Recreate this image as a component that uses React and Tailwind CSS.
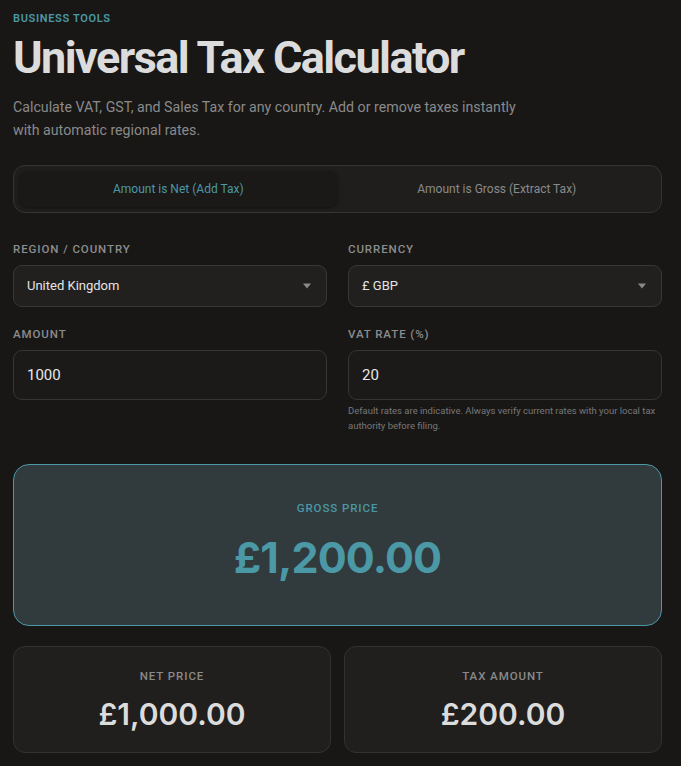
import { useState } from "react";

const SANS = "font-['Roboto','Liberation_Sans',sans-serif]";
const NUM = "font-['Inter','Roboto',sans-serif]";

function Caret() {
  return (
    <svg width="10" height="6" viewBox="0 0 10 6" className="shrink-0">
      <path d="M1 0.5h8L5 5.5z" fill="#8a8a8a" />
    </svg>
  );
}

function Label({ children }) {
  return (
    <label className="block text-[11.5px] font-medium tracking-[0.08em] uppercase text-[#8c8c8c] mb-[7px]">
      {children}
    </label>
  );
}

function Select({ value }) {
  return (
    <div className="h-[42px] rounded-[9px] border border-[#383736] bg-[#21201f] flex items-center justify-between pl-[13px] pr-[14px]">
      <span className="text-[13px] text-[#e4e4e4]">{value}</span>
      <Caret />
    </div>
  );
}

function Field({ value, onChange }) {
  return (
    <input
      value={value}
      onChange={(e) => onChange(e.target.value)}
      className="w-full h-[50px] rounded-[9px] border border-[#363534] bg-[#1b1a19] px-[13px] text-[15px] text-[#e8e8e8] outline-none"
    />
  );
}

function fmt(n) {
  return "£" + n.toLocaleString("en-GB", { minimumFractionDigits: 2, maximumFractionDigits: 2 });
}

export default function App() {
  const [mode, setMode] = useState("net");
  const [amount, setAmount] = useState("1000");
  const [rate, setRate] = useState("20");

  const a = parseFloat(amount) || 0;
  const r = (parseFloat(rate) || 0) / 100;
  const net = mode === "net" ? a : a / (1 + r);
  const tax = net * r;
  const gross = net + tax;

  return (
    <div className={`min-h-screen bg-[#181716] ${SANS} pl-[13px] pr-[19px] pt-[11px] pb-[14px]`}>
      <p className="text-[11px] font-semibold tracking-[0.06em] text-[#4b98a6]">BUSINESS TOOLS</p>
      <h1 className="mt-[5px] text-[45px] leading-[50px] font-bold tracking-[-0.035em] text-[#dcdcdc]">
        Universal Tax Calculator
      </h1>
      <p className="mt-[13px] text-[14.2px] leading-[23px] text-[#8a8a8a] max-w-[520px]">
        Calculate VAT, GST, and Sales Tax for any country. Add or remove taxes instantly with
        automatic regional rates.
      </p>

      <div className="mt-[23px] h-[48px] rounded-[12px] border border-[#353433] bg-[#1f1e1d] p-[5px] flex">
        <button
          onClick={() => setMode("net")}
          className={`flex-1 rounded-[9px] text-[12px] ${
            mode === "net" ? "bg-[#1a1918] text-[#4b98a6] shadow-[0_1px_3px_rgba(0,0,0,0.4)]" : "text-[#8a8a8a]"
          }`}
        >
          Amount is Net (Add Tax)
        </button>
        <button
          onClick={() => setMode("gross")}
          className={`flex-1 rounded-[9px] text-[12px] ${
            mode === "gross" ? "bg-[#1a1918] text-[#4b98a6] shadow-[0_1px_3px_rgba(0,0,0,0.4)]" : "text-[#8a8a8a]"
          }`}
        >
          Amount is Gross (Extract Tax)
        </button>
      </div>

      <div className="mt-[28px] grid grid-cols-2 gap-x-[21px]">
        <div>
          <Label>Region / Country</Label>
          <Select value="United Kingdom" />
        </div>
        <div>
          <Label>Currency</Label>
          <Select value="£ GBP" />
        </div>
      </div>

      <div className="mt-[19px] grid grid-cols-2 gap-x-[21px]">
        <div>
          <Label>Amount</Label>
          <Field value={amount} onChange={setAmount} />
        </div>
        <div>
          <Label>VAT Rate (%)</Label>
          <Field value={rate} onChange={setRate} />
          <p className="mt-[3px] text-[9.5px] leading-[15px] text-[#787878]">
            Default rates are indicative. Always verify current rates with your local tax authority
            before filing.
          </p>
        </div>
      </div>

      <div className="mt-[31px] h-[162px] rounded-[16px] border border-[#4b98a6] bg-[#313a3c] flex flex-col items-center pt-[35px]">
        <p className="text-[11.5px] font-medium tracking-[0.08em] text-[#4b98a6]">GROSS PRICE</p>
        <p className={`${NUM} mt-[16px] text-[43px] leading-[48px] font-bold tracking-[-0.02em] text-[#4b98a6]`}>
          {fmt(gross)}
        </p>
      </div>

      <div className="mt-[20px] grid grid-cols-2 gap-x-[13px]">
        <div className="h-[107px] rounded-[12px] border border-[#333231] bg-[#201f1e] flex flex-col items-center pt-[21px]">
          <p className="text-[11.5px] font-medium tracking-[0.08em] text-[#8a8a8a]">NET PRICE</p>
          <p className={`${NUM} mt-[12px] text-[30px] leading-[34px] font-semibold text-[#dcdcdc]`}>{fmt(net)}</p>
        </div>
        <div className="h-[107px] rounded-[12px] border border-[#333231] bg-[#201f1e] flex flex-col items-center pt-[21px]">
          <p className="text-[11.5px] font-medium tracking-[0.08em] text-[#8a8a8a]">TAX AMOUNT</p>
          <p className={`${NUM} mt-[12px] text-[30px] leading-[34px] font-semibold text-[#dcdcdc]`}>{fmt(tax)}</p>
        </div>
      </div>
    </div>
  );
}
